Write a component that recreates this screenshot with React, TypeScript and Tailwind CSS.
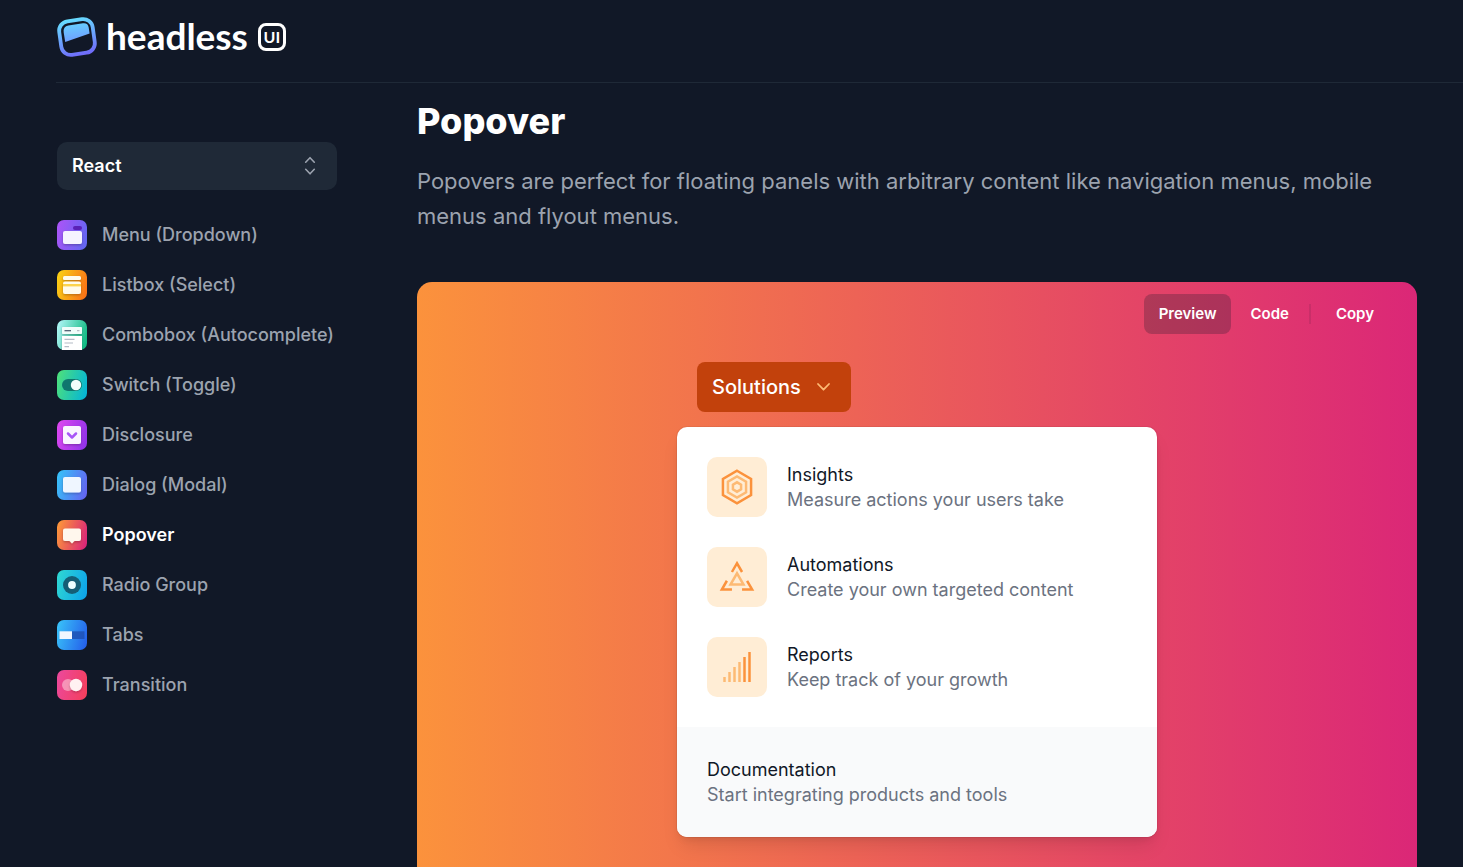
import type { ReactNode } from 'react'

function LogoMark() {
  return (
    <svg width="42" height="42" viewBox="0 0 42 42" fill="none" aria-hidden="true">
      <defs>
        <linearGradient id="ring" x1="18" y1="0" x2="24" y2="42" gradientUnits="userSpaceOnUse">
          <stop stopColor="#66e3ff" />
          <stop offset="1" stopColor="#7064f9" />
        </linearGradient>
        <linearGradient id="pane" x1="19" y1="5" x2="22" y2="26" gradientUnits="userSpaceOnUse">
          <stop stopColor="#66d5ff" />
          <stop offset="1" stopColor="#6f9bff" />
        </linearGradient>
      </defs>
      <g transform="rotate(-8 21 21)">
        <rect x="4.1" y="4.1" width="33.8" height="33.8" rx="9.5" stroke="url(#ring)" strokeWidth="3.8" />
      </g>
      <path
        d="M9.2 26L7.7 16.4Q6.900 10.400 12.400 9.400L27 7.300Q32 6.700 32.700 11.600L33.600 17.400Z"
        fill="url(#pane)"
      />
    </svg>
  )
}

function Tile({ id, from, to, children }: { id: string; from: string; to: string; children: ReactNode }) {
  return (
    <svg width="30" height="30" viewBox="0 0 30 30" fill="none" aria-hidden="true" className="shrink-0">
      <defs>
        <linearGradient id={id} x1="0" y1="11" x2="30" y2="19" gradientUnits="userSpaceOnUse">
          <stop stopColor={from} />
          <stop offset="1" stopColor={to} />
        </linearGradient>
        <filter id={`${id}-shadow`} x="-30%" y="-30%" width="160%" height="180%">
          <feDropShadow dx="0" dy="1.2" stdDeviation="1" floodColor="#000" floodOpacity="0.25" />
        </filter>
      </defs>
      <rect width="30" height="30" rx="7" fill={`url(#${id})`} />
      {children}
    </svg>
  )
}

const items: { label: string; icon: ReactNode; active?: boolean }[] = [
  {
    label: 'Menu (Dropdown)',
    icon: (
      <Tile id="menu" from="#a855f7" to="#6366f1">
        <rect x="16" y="6" width="9" height="4" rx="2" fill="#5b21b6" />
        <rect x="6" y="11" width="19" height="13" rx="2" fill="#f5f3ff" filter="url(#menu-shadow)" />
      </Tile>
    ),
  },
  {
    label: 'Listbox (Select)',
    icon: (
      <Tile id="listbox" from="#facc15" to="#f97316">
        <rect x="6" y="6" width="18" height="4" rx="1.5" fill="#fffbeb" filter="url(#listbox-shadow)" />
        <rect x="6" y="11.5" width="18" height="12.5" rx="2" fill="#fffbeb" filter="url(#listbox-shadow)" />
        <path d="M6 14h18v2.4H6z" fill="#fcd34d" />
      </Tile>
    ),
  },
  {
    label: 'Combobox (Autocomplete)',
    icon: (
      <Tile id="combobox" from="#a7f3f0" to="#10b981">
        <rect x="5" y="7" width="20" height="7" rx="0.8" fill="#f0fdfa" filter="url(#combobox-shadow)" />
        <path d="M5 16h20v14H5z" fill="#fff" filter="url(#combobox-shadow)" />
        <path d="M7.5 10.7H14" stroke="#475569" strokeWidth="1.2" />
        <path d="M20 10.7h2.5M7.5 19.3h10M7.5 23h8.5M7.5 26.7H12" stroke="#b4bcc6" strokeWidth="1.2" />
      </Tile>
    ),
  },
  {
    label: 'Switch (Toggle)',
    icon: (
      <Tile id="switch" from="#4ade80" to="#06b6d4">
        <rect x="5" y="9" width="20" height="12" rx="6" fill="#0f766e" />
        <circle cx="19" cy="15" r="5.2" fill="#f0fdfa" />
      </Tile>
    ),
  },
  {
    label: 'Disclosure',
    icon: (
      <Tile id="disclosure" from="#d946ef" to="#9333ea">
        <rect x="6" y="6" width="18" height="18" rx="2" fill="#faf5ff" filter="url(#disclosure-shadow)" />
        <path d="M11 13.5l4 4 4-4" stroke="#a855f7" strokeWidth="2.5" strokeLinecap="round" strokeLinejoin="round" />
      </Tile>
    ),
  },
  {
    label: 'Dialog (Modal)',
    icon: (
      <Tile id="dialog" from="#38bdf8" to="#6366f1">
        <rect x="6" y="7" width="18" height="15.5" rx="2" fill="#eff6ff" filter="url(#dialog-shadow)" />
      </Tile>
    ),
  },
  {
    label: 'Popover',
    active: true,
    icon: (
      <Tile id="popover" from="#fb923c" to="#db2777">
        <path
          d="M8 8.5h14a2 2 0 0 1 2 2V19a2 2 0 0 1-2 2h-4.6L15 23.4 12.6 21H8a2 2 0 0 1-2-2v-8.5a2 2 0 0 1 2-2z"
          fill="#fff7ed"
          filter="url(#popover-shadow)"
        />
      </Tile>
    ),
  },
  {
    label: 'Radio Group',
    icon: (
      <Tile id="radio" from="#2dd4d4" to="#0ea5e9">
        <circle cx="15" cy="15" r="9" fill="#155e75" />
        <circle cx="15" cy="15" r="3.9" fill="#ecfeff" />
      </Tile>
    ),
  },
  {
    label: 'Tabs',
    icon: (
      <Tile id="tabs" from="#38bdf8" to="#2563eb">
        <path d="M2.5 11.3H15V19H2.5z" fill="#eff6ff" />
        <path d="M15 11.3h12.5V19H15z" fill="#1e4fb0" fillOpacity="0.8" />
      </Tile>
    ),
  },
  {
    label: 'Transition',
    icon: (
      <Tile id="transition" from="#ec4899" to="#f43f5e">
        <circle cx="11" cy="15" r="6" fill="#fff1f2" fillOpacity="0.45" />
        <circle cx="19" cy="15" r="6.2" fill="#fff1f2" filter="url(#transition-shadow)" />
      </Tile>
    ),
  },
]

function SolutionIcon({ children }: { children: ReactNode }) {
  return (
    <svg width="60" height="60" viewBox="0 0 48 48" fill="none" aria-hidden="true" className="shrink-0">
      <rect width="48" height="48" rx="8" fill="#ffedd5" />
      {children}
    </svg>
  )
}

const solutions = [
  {
    name: 'Insights',
    description: 'Measure actions your users take',
    icon: (
      <SolutionIcon>
        <path d="M24 11L35.2583 17.5V30.5L24 37L12.7417 30.5V17.5L24 11Z" stroke="#FB923C" strokeWidth="2" />
        <path
          d="M16.7417 19.8094V28.1906L24 32.3812L31.2584 28.1906V19.8094L24 15.6188L16.7417 19.8094Z"
          stroke="#FDBA74"
          strokeWidth="2"
        />
        <path
          d="M20.7417 22.1196V25.882L24 27.7632L27.2584 25.882V22.1196L24 20.2384L20.7417 22.1196Z"
          stroke="#FDBA74"
          strokeWidth="2"
        />
      </SolutionIcon>
    ),
  },
  {
    name: 'Automations',
    description: 'Create your own targeted content',
    icon: (
      <SolutionIcon>
        <path
          d="M28.0413 20L23.9998 13L19.9585 20M32.0828 27.0001L36.1242 34H28.0415M19.9585 34H11.8755L15.9171 27"
          stroke="#FB923C"
          strokeWidth="2"
        />
        <path d="M18.804 30H29.1963L24.0001 21L18.804 30Z" stroke="#FDBA74" strokeWidth="2" />
      </SolutionIcon>
    ),
  },
  {
    name: 'Reports',
    description: 'Keep track of your growth',
    icon: (
      <SolutionIcon>
        <rect x="13" y="32" width="2" height="4" fill="#FDBA74" />
        <rect x="17" y="28" width="2" height="8" fill="#FDBA74" />
        <rect x="21" y="24" width="2" height="12" fill="#FDBA74" />
        <rect x="25" y="20" width="2" height="16" fill="#FDBA74" />
        <rect x="29" y="16" width="2" height="20" fill="#FB923C" />
        <rect x="33" y="12" width="2" height="24" fill="#FB923C" />
      </SolutionIcon>
    ),
  },
]

function Sidebar() {
  return (
    <aside className="w-[280px] shrink-0 pt-[59px]">
      <div className="grid items-center">
        <select
          aria-label="Framework"
          className="col-start-1 row-start-1 h-12 w-full appearance-none rounded-[10px] bg-[#1f2937] px-[15px] pb-0.5 text-[18px] font-semibold text-white"
        >
          <option>React</option>
          <option>Vue</option>
        </select>
        <svg
          width="12"
          height="20"
          viewBox="0 0 12 20"
          fill="none"
          stroke="#9ca3af"
          strokeWidth="1.6"
          strokeLinecap="round"
          strokeLinejoin="round"
          aria-hidden="true"
          className="pointer-events-none col-start-1 row-start-1 mr-[21px] justify-self-end"
        >
          <path d="M1.7 6.2L6 1.7l4.3 4.5M1.7 13.3L6 17.8l4.3-4.5" />
        </svg>
      </div>
      <nav aria-label="Components" className="mt-[30px]">
        <ul className="flex flex-col gap-5">
          {items.map((item) => (
            <li key={item.label}>
              <a
                href="#"
                aria-current={item.active ? 'page' : undefined}
                className={
                  item.active
                    ? 'flex h-[30px] items-center gap-[15px] text-[18px] font-semibold text-white'
                    : 'flex h-[30px] items-center gap-[15px] text-[18px] font-medium text-[#9ca3af]'
                }
              >
                {item.icon}
                <span className="pb-0.5">{item.label}</span>
              </a>
            </li>
          ))}
        </ul>
      </nav>
    </aside>
  )
}

function Preview() {
  return (
    <section
      aria-label="Example"
      className="mt-12 flex flex-1 flex-col rounded-t-[15px] bg-linear-to-r/srgb from-[#fb923c] to-[#db2777] px-[18px] pt-3 pb-[30px]"
    >
      <div className="flex h-10 items-center justify-end text-[15px] font-semibold text-white">
        <button type="button" className="mr-1 h-10 rounded-lg bg-[#111827]/25 px-[15px]">
          Preview
        </button>
        <button type="button" className="h-10 px-[15px]">
          Code
        </button>
        <span className="ml-[5px] h-5 w-0.5 bg-[#111827]/10" />
        <button type="button" className="h-10 px-[25px]">
          Copy
        </button>
      </div>
      <div className="mx-auto mt-7 w-[480px] max-w-full">
        <button
          type="button"
          aria-expanded="true"
          className="ml-5 flex h-[50px] items-center gap-[15px] rounded-lg bg-[#c2410c] pr-5 pl-[15px] text-[20px] font-medium text-white"
        >
          Solutions
          <svg
            width="15"
            height="10"
            viewBox="0 0 15 10"
            fill="none"
            stroke="#fdba74"
            strokeWidth="1.8"
            strokeLinecap="round"
            strokeLinejoin="round"
            aria-hidden="true"
          >
            <path d="M2 2l5.5 5.7L13 2" />
          </svg>
        </button>
        <div className="mt-[15px] overflow-hidden rounded-[10px] bg-white text-[18px] leading-[25px] shadow-[0_12px_19px_-4px_rgb(0_0_0/0.1),0_5px_8px_-4px_rgb(0_0_0/0.1),0_0_0_1px_rgb(0_0_0/0.05)]">
          <ul className="flex flex-col gap-[30px] p-[30px]">
            {solutions.map((item) => (
              <li key={item.name}>
                <a href="#" className="flex items-center gap-5">
                  {item.icon}
                  <span>
                    <span className="block text-[#111827]">{item.name}</span>
                    <span className="block text-[#6b7280]">{item.description}</span>
                  </span>
                </a>
              </li>
            ))}
          </ul>
          <a href="#" className="block bg-[#f9fafb] p-[30px]">
            <span className="block text-[#111827]">Documentation</span>
            <span className="block text-[#6b7280]">Start integrating products and tools</span>
          </a>
        </div>
      </div>
    </section>
  )
}

export default function App() {
  return (
    <div className="flex min-h-screen flex-col bg-[#111827] pl-14 font-[Inter,sans-serif] antialiased">
      <header className="flex h-[83px] shrink-0 items-start border-b border-[#1f2937] pt-4">
        <a href="#" className="flex h-[42px] items-center text-white">
          <LogoMark />
          <span className="ml-2 pb-0.5 font-[Lato,sans-serif] text-[37px] leading-[42px] font-bold">headless</span>
          <span className="ml-2.5 flex h-7 w-7 items-center justify-center rounded-lg border-[3px] border-white font-[Lato,sans-serif] text-[16px] leading-none font-bold">
            UI
          </span>
        </a>
      </header>
      <div className="flex flex-1 gap-20 pr-[46px] pl-px">
        <Sidebar />
        <main className="flex min-w-0 flex-1 flex-col pt-[15px]">
          <h1 className="text-[36px] leading-[46px] font-extrabold text-white">Popover</h1>
          <p className="mt-5 text-[22px] leading-[35px] text-[#9ca3af]">
            Popovers are perfect for floating panels with arbitrary content like navigation menus, mobile menus and
            flyout menus.
          </p>
          <Preview />
        </main>
      </div>
    </div>
  )
}
